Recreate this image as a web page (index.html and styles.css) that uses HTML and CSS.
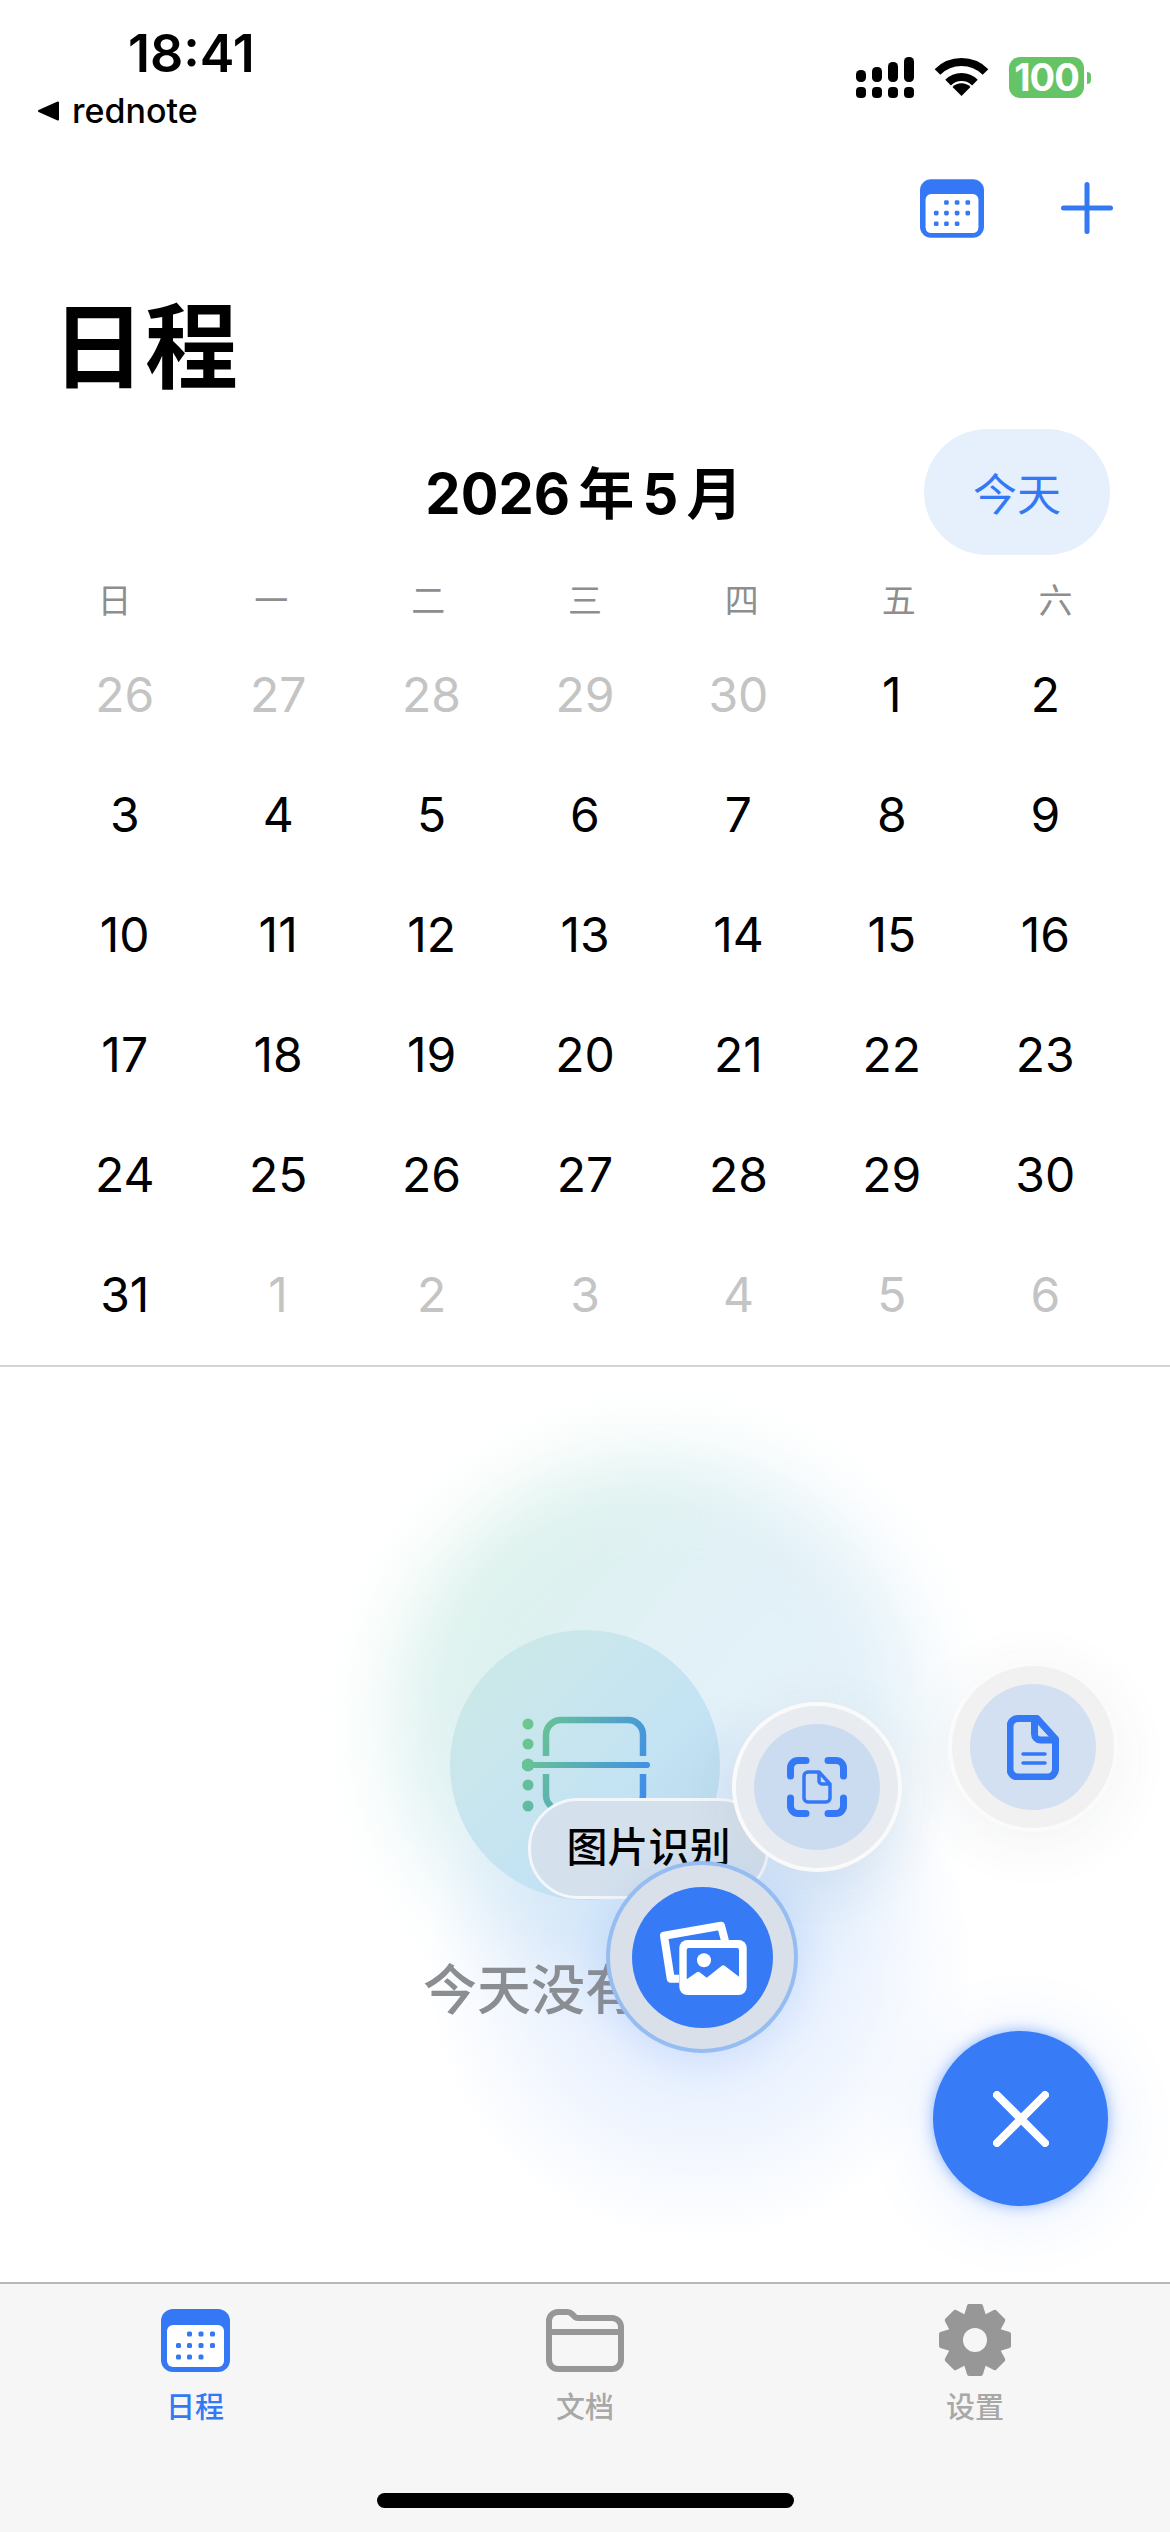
FILE: index.html
```html
<!DOCTYPE html>
<html lang="zh-CN">
<head>
    <meta charset="UTF-8">
    <meta name="viewport" content="width=device-width, initial-scale=1.0">
    <title>日程</title>
    <link rel="stylesheet" href="styles.css">
</head>
<body>
    <svg class="defs" width="0" height="0">
        <symbol id="calendar" viewBox="0 0 69 63">
            <rect width="69" height="63" rx="12" fill="#3478f6"/>
            <rect x="6" y="16" width="57" height="42" rx="6" fill="#fff"/>
            <g fill="#3478f6">
                <rect x="26" y="22.5" width="5" height="5" rx="1.5"/>
                <rect x="37.500" y="22.5" width="5" height="5" rx="1.5"/>
                <rect x="49" y="22.5" width="5" height="5" rx="1.5"/>
                <rect x="15" y="34" width="5" height="5" rx="1.5"/>
                <rect x="26" y="34" width="5" height="5" rx="1.5"/>
                <rect x="37.500" y="34" width="5" height="5" rx="1.5"/>
                <rect x="49" y="34" width="5" height="5" rx="1.5"/>
                <rect x="15" y="45.5" width="5" height="5" rx="1.5"/>
                <rect x="26" y="45.5" width="5" height="5" rx="1.5"/>
                <rect x="37.500" y="45.5" width="5" height="5" rx="1.5"/>
            </g>
        </symbol>
        <linearGradient id="planner-stroke" gradientUnits="userSpaceOnUse" x1="0" y1="20" x2="130" y2="70">
            <stop offset="0" stop-color="#6cc88c"/>
            <stop offset="1" stop-color="#3f8ceb"/>
        </linearGradient>
    </svg>

    <header class="status">
        <div class="status-left">
            <div class="time">18:41</div>
            <div class="back-app">
                <svg width="23" height="20" viewBox="0 0 23 20"><path d="M21 1.500V18.500L2 10Z" fill="#000" stroke="#000" stroke-width="2" stroke-linejoin="round"/></svg>
                <span>rednote</span>
            </div>
        </div>
        <div class="status-right">
            <svg class="signal" width="58" height="41" viewBox="0 0 58 41">
                <rect x="0" y="13" width="10" height="12" rx="4.500"/>
                <rect x="16" y="10" width="10" height="15" rx="4.500"/>
                <rect x="32" y="5" width="10" height="20" rx="4.500"/>
                <rect x="48" y="0" width="10" height="25" rx="4.500"/>
                <rect x="0" y="30" width="10" height="11" rx="4"/>
                <rect x="16" y="30" width="10" height="11" rx="4"/>
                <rect x="32" y="30" width="10" height="11" rx="4"/>
                <rect x="48" y="30" width="10" height="11" rx="4"/>
            </svg>
            <svg class="wifi" width="51" height="38" viewBox="0 0 51 38">
                <path d="M1.500 14A34 34 0 0 1 49.500 14" fill="none" stroke="#000" stroke-width="8"/>
                <path d="M12.100 24.600A19 19 0 0 1 38.900 24.600" fill="none" stroke="#000" stroke-width="8"/>
                <path d="M25.500 38L16.500 29A12.700 12.700 0 0 1 34.500 29Z"/>
            </svg>
            <div class="battery"><span class="battery-body">100</span><span class="battery-nub"></span></div>
        </div>
    </header>

    <nav class="toolbar">
        <svg width="64" height="59"><use href="#calendar"/></svg>
        <svg class="plus" width="52" height="52" viewBox="0 0 52 52"><path d="M26 2.500V49.500M2.500 26H49.500" stroke="#3478f6" stroke-width="5" stroke-linecap="round"/></svg>
    </nav>

    <h1 class="page-title">日程</h1>

    <section class="calendar">
        <div class="month-head">
            <div class="month-name">2026 年 5 月</div>
            <button class="today-btn">今天</button>
        </div>
        <div class="weekdays">
            <div>日</div><div>一</div><div>二</div><div>三</div><div>四</div><div>五</div><div>六</div>
        </div>
        <div class="days">
            <div class="other">26</div><div class="other">27</div><div class="other">28</div><div class="other">29</div><div class="other">30</div><div>1</div><div>2</div>
            <div>3</div><div>4</div><div>5</div><div>6</div><div>7</div><div>8</div><div>9</div>
            <div>10</div><div>11</div><div>12</div><div>13</div><div>14</div><div>15</div><div>16</div>
            <div>17</div><div>18</div><div>19</div><div>20</div><div>21</div><div>22</div><div>23</div>
            <div>24</div><div>25</div><div>26</div><div>27</div><div>28</div><div>29</div><div>30</div>
            <div>31</div><div class="other">1</div><div class="other">2</div><div class="other">3</div><div class="other">4</div><div class="other">5</div><div class="other">6</div>
        </div>
    </section>

    <main class="agenda">
        <div class="glow glow-top"></div>
        <div class="glow glow-bottom"></div>

        <div class="empty">
            <div class="empty-circle">
                <svg width="130" height="100" viewBox="0 0 130 100">
                    <g fill="url(#planner-stroke)">
                        <circle cx="6" cy="9" r="5.500"/>
                        <circle cx="6" cy="29" r="5.500"/>
                        <circle cx="6" cy="50" r="6.500"/>
                        <circle cx="6" cy="70" r="5.500"/>
                        <circle cx="6" cy="91" r="5.500"/>
                    </g>
                    <path d="M24 41V20A15 15 0 0 1 39 5H106A15 15 0 0 1 121 20V41M24 59V80A15 15 0 0 0 39 95H106A15 15 0 0 0 121 80V59" fill="none" stroke="url(#planner-stroke)" stroke-width="6.500"/>
                    <path d="M6 50H125" fill="none" stroke="url(#planner-stroke)" stroke-width="6" stroke-linecap="round"/>
                </svg>
            </div>
            <p class="empty-text">今天没有日程</p>
        </div>

        <div class="fab-label">图片识别</div>

        <button class="action action-scan">
            <span class="action-inner">
                <svg width="60" height="60" viewBox="0 0 60 60" fill="none" stroke="#3478f6">
                    <path d="M3.500 19V11A7.500 7.500 0 0 1 11 3.500H19M41 3.500H49A7.500 7.500 0 0 1 56.500 11V19M56.500 41V49A7.500 7.500 0 0 1 49 56.500H41M19 56.500H11A7.500 7.500 0 0 1 3.500 49V41" stroke-width="7" stroke-linecap="round"/>
                    <path d="M21 15H32L43 27V41A4 4 0 0 1 39 45H21A4 4 0 0 1 17 41V19A4 4 0 0 1 21 15Z" stroke-width="3.500" stroke-linejoin="round"/>
                    <path d="M32 15V24A3 3 0 0 0 35 27H43" stroke-width="3.500"/>
                </svg>
            </span>
        </button>

        <button class="action action-doc">
            <span class="action-inner">
                <svg width="52" height="65" viewBox="0 0 52 65" fill="none" stroke="#3478f6">
                    <path d="M11 3.500H30L48.500 24V54A8 8 0 0 1 40.500 62H11A8 8 0 0 1 3 54V11.500A8 8 0 0 1 11 3.500Z" stroke-width="7" stroke-linejoin="round"/>
                    <path d="M27.500 4V19A6 6 0 0 0 33.500 25H48" stroke-width="7"/>
                    <path d="M16 39H38M16 48H38" stroke-width="3.500" stroke-linecap="round"/>
                </svg>
            </span>
        </button>

        <button class="action action-image">
            <span class="action-inner">
                <svg width="96" height="84" viewBox="34 35 96 84">
                    <path d="M59 98.700H50.700L44 55.700L101 45.700L105 60.700" fill="none" stroke="#fff" stroke-width="8" stroke-linejoin="round"/>
                    <rect x="59.300" y="60" width="67.400" height="55" rx="8" fill="#fff"/>
                    <path d="M66.700 99.300V70A2 2 0 0 1 68.700 68H117A2 2 0 0 1 119 70V96.700L105 86A3 3 0 0 0 101.500 86L86.700 97.700L80 92.500A3 3 0 0 0 76.500 92.500Z" fill="#367bf5"/>
                    <circle cx="84" cy="80.300" r="7" fill="#fff"/>
                </svg>
            </span>
        </button>

        <button class="close-fab">
            <svg width="56" height="56" viewBox="0 0 56 56"><path d="M4 4L52 52M52 4L4 52" stroke="#fff" stroke-width="8" stroke-linecap="round"/></svg>
        </button>
    </main>

    <footer class="tabbar">
        <div class="tabs">
            <div class="tab active">
                <div class="tab-icon"><svg width="69" height="63"><use href="#calendar"/></svg></div>
                <span>日程</span>
            </div>
            <div class="tab">
                <div class="tab-icon">
                    <svg width="78" height="63" viewBox="0 0 78 63" fill="none" stroke="#979797" stroke-width="6">
                        <path d="M3 51V12A9 9 0 0 1 12 3H21A7 7 0 0 1 26 5L29 8A6 6 0 0 0 33 9H66A9 9 0 0 1 75 18V51A9 9 0 0 1 66 60H12A9 9 0 0 1 3 51Z" stroke-linejoin="round"/>
                        <path d="M3 23H75"/>
                    </svg>
                </div>
                <span>文档</span>
            </div>
            <div class="tab">
                <div class="tab-icon">
                    <svg width="74" height="74" viewBox="0 0 74 74">
                        <g fill="#979797" stroke="#979797" stroke-width="4" stroke-linejoin="round">
                            <circle cx="37" cy="37" r="25"/>
                            <path id="gear-tooth" d="M31 3H43L47 16H27Z"/>
                            <use href="#gear-tooth" transform="rotate(45 37 37)"/>
                            <use href="#gear-tooth" transform="rotate(90 37 37)"/>
                            <use href="#gear-tooth" transform="rotate(135 37 37)"/>
                            <use href="#gear-tooth" transform="rotate(180 37 37)"/>
                            <use href="#gear-tooth" transform="rotate(225 37 37)"/>
                            <use href="#gear-tooth" transform="rotate(270 37 37)"/>
                            <use href="#gear-tooth" transform="rotate(315 37 37)"/>
                        </g>
                        <circle cx="37" cy="37" r="12" fill="#f6f6f6"/>
                    </svg>
                </div>
                <span>设置</span>
            </div>
        </div>
        <div class="home-bar"></div>
    </footer>
</body>
</html>
```

FILE: styles.css
```css
* {
    box-sizing: border-box;
}

html, body {
    margin: 0;
    padding: 0;
}

body {
    width: 1170px;
    height: 2532px;
    overflow: hidden;
    background: #fff;
    color: #000;
    font-family: Inter, "Noto Sans CJK SC", sans-serif;
}

button {
    border: 0;
    padding: 0;
    font-family: inherit;
}

.defs {
    position: absolute;
}

/* status bar */
.status {
    height: 160px;
    display: flex;
    justify-content: space-between;
    padding: 29px 79px 0 37px;
}

.time {
    margin-left: 91px;
    font-size: 52px;
    line-height: 50px;
    font-weight: 600;
}

.back-app {
    display: flex;
    align-items: center;
    gap: 12px;
    margin-top: 12px;
    font-size: 34px;
    line-height: 40px;
    font-weight: 500;
}

.status-right {
    display: flex;
    align-items: flex-start;
    padding-top: 28px;
}

.wifi {
    margin-left: 22px;
    margin-top: 1px;
    overflow: visible;
}

.battery {
    display: flex;
    align-items: center;
    margin-left: 22px;
}

.battery-body {
    width: 75px;
    height: 41px;
    border-radius: 11px;
    background: #65c466;
    color: #fff;
    font-size: 38px;
    line-height: 41px;
    font-weight: 700;
    text-align: center;
    letter-spacing: -1px;
}

.battery-nub {
    width: 4px;
    height: 12px;
    margin-left: 3px;
    border-radius: 0 6px 6px 0;
    background: #65c466;
}

/* top toolbar */
.toolbar {
    height: 96px;
    display: flex;
    align-items: center;
    justify-content: flex-end;
    gap: 77px;
    padding-right: 57px;
}

.page-title {
    margin: 31px 0 0;
    padding-left: 52px;
    font-size: 93px;
    line-height: 120px;
    font-weight: 700;
}

/* month grid */
.calendar {
    margin-top: 22px;
    padding-bottom: 13px;
    border-bottom: 2px solid #d4d4d4;
}

.month-head {
    display: grid;
    grid-template-columns: 1fr auto 1fr;
    align-items: center;
    height: 126px;
}

.month-name {
    grid-column: 2;
    margin: 0 2px 6px 0;
    font-size: 56px;
    font-weight: 700;
    word-spacing: -5px;
}

.today-btn {
    grid-column: 3;
    justify-self: end;
    width: 186px;
    height: 126px;
    margin-right: 60px;
    border-radius: 63px;
    background: #e6f0fd;
    color: #3478f6;
    font-size: 44px;
}

.weekdays {
    display: grid;
    grid-template-columns: repeat(7, 1fr);
    margin-top: 23px;
    padding: 0 36px;
    color: #8e8e8e;
    font-size: 34px;
    line-height: 46px;
    text-align: center;
}

.days {
    display: grid;
    grid-template-columns: repeat(7, 1fr);
    grid-auto-rows: 120px;
    margin-top: 11px;
    margin-bottom: -3px;
    padding: 0 48px;
    font-size: 48px;
    line-height: 120px;
    text-align: center;
}

.days .other {
    color: #c4c4c4;
}

/* lower part with the open action menu */
.agenda {
    position: relative;
    height: 915px;
    overflow: hidden;
}

.glow {
    position: absolute;
    border-radius: 50%;
}

.glow-top {
    left: 395px;
    top: 90px;
    width: 530px;
    height: 530px;
    background: linear-gradient(130deg, #d6f2e4 0%, #e2f1f7 45%, #e8f2fc 100%);
    filter: blur(38px);
}

.glow-bottom {
    left: 430px;
    top: 330px;
    width: 540px;
    height: 540px;
    background: radial-gradient(circle, rgba(110, 165, 250, 0.24) 0%, rgba(130, 175, 250, 0.13) 42%, rgba(150, 190, 250, 0) 72%);
}

.empty {
    position: relative;
    display: flex;
    flex-direction: column;
    align-items: center;
    padding-top: 263px;
}

.empty-circle {
    width: 270px;
    height: 270px;
    display: flex;
    align-items: center;
    justify-content: center;
    padding-left: 4px;
    border-radius: 50%;
    background: linear-gradient(135deg, #cdeae5 0%, #c4e3f3 60%, #b6d8ec 100%);
}

.empty-text {
    margin: 55px 0 0;
    color: #8a8d92;
    font-size: 54px;
    line-height: 72px;
    font-weight: 500;
}

.fab-label {
    position: absolute;
    left: 528px;
    top: 431px;
    width: 241px;
    height: 101px;
    border: 3px solid #f3f6fa;
    border-radius: 50px;
    background: #d4e0ec;
    font-size: 41px;
    line-height: 93px;
    font-weight: 500;
    text-align: center;
}

.action {
    position: absolute;
    width: 170px;
    height: 170px;
    display: flex;
    align-items: center;
    justify-content: center;
    border: 4px solid #fafafa;
    border-radius: 50%;
    box-shadow: 0 10px 60px rgba(60, 70, 80, 0.07);
}

.action-inner {
    width: 126px;
    height: 126px;
    display: flex;
    align-items: center;
    justify-content: center;
    border-radius: 50%;
    background: #d3e0f2;
}

.action-doc {
    left: 948px;
    top: 295px;
    background: #f1f1f1;
    border-color: #fbfbfb;
}

.action-scan {
    left: 732px;
    top: 335px;
    background: #e8ebef;
}

.action-scan .action-inner {
    background: #cbdcf1;
}

.action-image {
    left: 606px;
    top: 494px;
    width: 192px;
    height: 192px;
    background: #dae0e9;
    border-color: #96bdf2;
    box-shadow: 0 10px 40px rgba(70, 130, 245, 0.14);
}

.action-image .action-inner {
    width: 141px;
    height: 141px;
    background: #367bf5;
}

.close-fab {
    position: absolute;
    left: 933px;
    top: 664px;
    width: 175px;
    height: 175px;
    display: flex;
    align-items: center;
    justify-content: center;
    border-radius: 50%;
    background: #377bf6;
    box-shadow: 0 0 14px rgba(55, 123, 246, 0.55), 0 6px 70px rgba(55, 123, 246, 0.16);
}

/* bottom tabs */
.tabbar {
    height: 250px;
    background: #f6f6f6;
    border-top: 2px solid #b8b8b8;
}

.tabs {
    display: grid;
    grid-template-columns: repeat(3, 1fr);
    padding-top: 19px;
}

.tab {
    display: flex;
    flex-direction: column;
    align-items: center;
    color: #a8a8a8;
    font-size: 29px;
    line-height: 36px;
    font-weight: 500;
}

.tab.active {
    color: #3478f6;
}

.tab-icon {
    height: 74px;
    margin-bottom: 13px;
    display: flex;
    align-items: center;
}

.home-bar {
    width: 417px;
    height: 15px;
    margin: 67px auto 0;
    border-radius: 8px;
    background: #000;
}
```
